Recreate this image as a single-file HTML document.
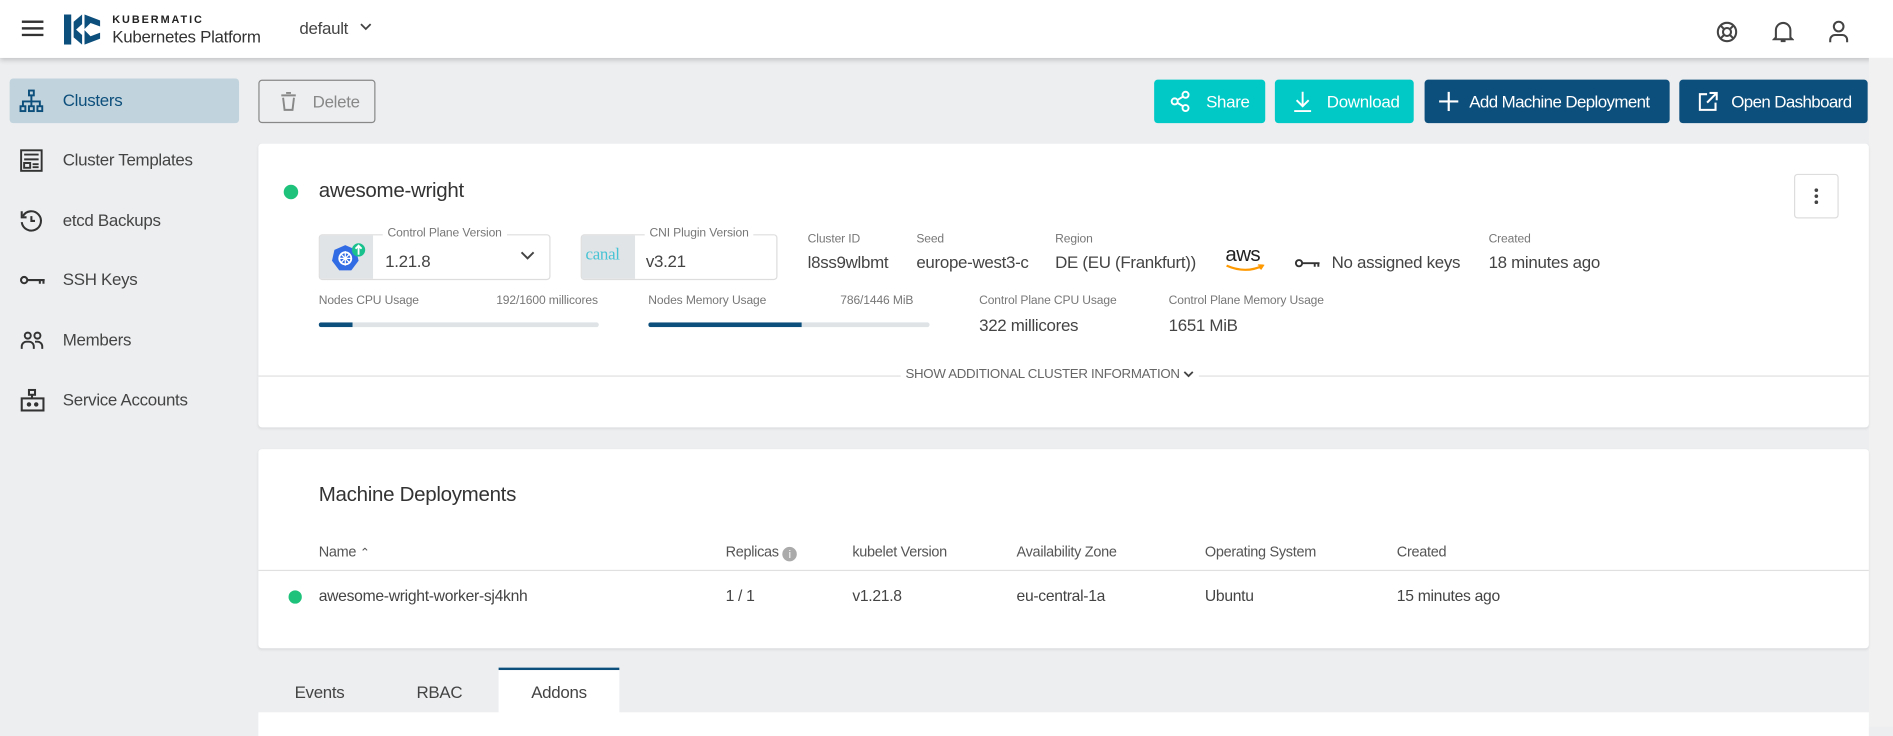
<!DOCTYPE html>
<html><head><meta charset="utf-8"><style>
*{box-sizing:border-box;margin:0;padding:0}
html,body{width:1893px;height:727px;overflow:hidden;background:#eceef0;font-family:"Liberation Sans",Arial,sans-serif}
#w{position:absolute;left:0;top:0;width:1568px;height:602px;transform:scale(1.20727);transform-origin:0 0;background:#eceef0;color:#333;letter-spacing:-0.25px}
.a{position:absolute}
.top{left:0;top:0;width:1568px;height:48px;background:#fff;box-shadow:0 2px 4px rgba(0,0,0,.18)}
.nav{left:8px;width:190px;height:37px;font-size:14px;color:#444;line-height:37px;padding-left:44px;border-radius:3px}
.nav svg{position:absolute;left:8px;top:9px}
.btn{top:66px;height:36px;border-radius:3px;color:#fff;font-size:14px;line-height:36px}
.card{background:#fff;border-radius:3px;box-shadow:0 1px 2px rgba(0,0,0,.08)}
.lbl{font-size:10px;color:#777;letter-spacing:-0.1px}
.val{font-size:14px;color:#444}
.bar{height:4px;background:#dfe3e6;border-radius:2px;overflow:hidden}
.bar i{display:block;height:4px;background:#0d4f7c}
.th{font-size:12px;color:#555;top:450px}
.td{font-size:13px;color:#444;top:486px}
</style></head><body><div id="w">
<div class="a top">
 <svg class="a" style="left:18px;top:17px" width="18" height="13"><rect y="0" width="18" height="2" fill="#333"/><rect y="5.5" width="18" height="2" fill="#333"/><rect y="11" width="18" height="2" fill="#333"/></svg>
 <svg class="a" style="left:53px;top:12px" width="30" height="25" viewBox="0 0 30 25"><path d="M0 0h6v25H0z" fill="#0d4f7c"/><path d="M8 6 L15 0 L15 8 L10 12.5 L15 17 L15 25 L8 19z" fill="#0d4f7c"/><path d="M17 0 L30 5 L30 10 L22 7 L17 12z M17 13 L22 18 L30 15 L30 20 L17 25z" fill="#0d4f7c"/></svg>
 <div class="a" style="left:93px;top:11px;font-size:9px;font-weight:bold;letter-spacing:1.6px;color:#222">KUBERMATIC</div>
 <div class="a" style="left:93px;top:22px;font-size:14px;color:#333">Kubernetes Platform</div>
 <div class="a" style="left:248px;top:15px;font-size:14px;color:#444">default</div>
 <svg class="a" style="left:298px;top:19px" width="10" height="7"><path d="M1 1l4 4 4-4" stroke="#444" stroke-width="1.5" fill="none"/></svg>
 <svg class="a" style="left:1421px;top:17px" width="19" height="19" viewBox="0 0 20 20" fill="none" stroke="#444" stroke-width="1.8"><circle cx="10" cy="10" r="8"/><circle cx="10" cy="10" r="3.5"/><path d="M4.5 4.5l3 3M15.5 4.5l-3 3M4.5 15.5l3-3M15.5 15.5l-3-3"/></svg>
 <svg class="a" style="left:1468px;top:16px" width="18" height="20" viewBox="0 0 18 20" fill="none" stroke="#444" stroke-width="1.7"><path d="M3 15V9a6 6 0 0 1 12 0v6l1.5 1.5h-15z"/><path d="M7 18h4"/></svg>
 <svg class="a" style="left:1514px;top:16px" width="18" height="20" viewBox="0 0 18 20" fill="none" stroke="#444" stroke-width="1.7"><circle cx="9" cy="6" r="4"/><path d="M2 19v-2a4 4 0 0 1 4-4h6a4 4 0 0 1 4 4v2"/></svg>
</div>
<div class="a" style="left:1548px;top:48px;width:20px;height:554px;background:#f1f1f1"></div>

<div class="a nav" style="top:65px;background:#c1d3dc;color:#0d4f7c"><svg width="20" height="20" viewBox="0 0 20 20" fill="none" stroke="#0d4f7c" stroke-width="1.6"><rect x="8" y="1" width="4" height="4"/><rect x="1" y="14" width="4" height="4"/><rect x="8" y="14" width="4" height="4"/><rect x="15" y="14" width="4" height="4"/><path d="M10 5v9M3 14v-4h14v4"/></svg>Clusters</div>
<div class="a nav" style="top:114px"><svg width="20" height="20" viewBox="0 0 20 20" fill="none" stroke="#333" stroke-width="1.6"><rect x="1.5" y="1.5" width="17" height="17"/><path d="M4 5h12M4 9h12M4 12h5v4H4zM11 13h5M11 15.5h5"/></svg>Cluster Templates</div>
<div class="a nav" style="top:164px"><svg width="20" height="20" viewBox="0 0 20 20" fill="none" stroke="#333" stroke-width="1.7"><path d="M3 6a8 8 0 1 1-1 5"/><path d="M2 2v5h4"/><path d="M10 6v4h3"/></svg>etcd Backups</div>
<div class="a nav" style="top:213px"><svg width="22" height="20" viewBox="0 0 22 20" fill="none" stroke="#333" stroke-width="1.7"><circle cx="4" cy="10" r="2.6"/><path d="M7 10h14M17 10v3M20 10v3"/></svg>SSH Keys</div>
<div class="a nav" style="top:263px"><svg width="22" height="20" viewBox="0 0 22 20" fill="none" stroke="#333" stroke-width="1.6"><circle cx="7" cy="6" r="2.5"/><circle cx="15" cy="6" r="2.5"/><path d="M2 17v-2a4 4 0 0 1 4-4h2a4 4 0 0 1 4 4v2M13 11h2a4 4 0 0 1 4 4v2"/></svg>Members</div>
<div class="a nav" style="top:313px"><svg width="22" height="20" viewBox="0 0 22 20" fill="none" stroke="#333" stroke-width="1.7"><rect x="8" y="1" width="5" height="4"/><path d="M10.5 5v3"/><rect x="2" y="8" width="18" height="10"/><circle cx="8" cy="13" r="1" fill="#333"/><circle cx="14" cy="13" r="1" fill="#333"/></svg>Service Accounts</div>

<div class="a" style="left:214px;top:66px;width:97px;height:36px;border:1px solid #888;border-radius:3px;color:#888;font-size:14px;line-height:34px;padding-left:44px">Delete
<svg class="a" style="left:17px;top:9px" width="14" height="16" viewBox="0 0 14 16" fill="none" stroke="#888" stroke-width="1.6"><path d="M1 3h12M5 1h4M2.5 5l1.2 10h6.6l1.2-10"/></svg></div>
<div class="a btn" style="left:956px;width:92px;background:#00c9c6;padding-left:43px">Share<svg class="a" style="left:13px;top:9px" width="17" height="18" viewBox="0 0 17 18" fill="none" stroke="#fff" stroke-width="1.6"><circle cx="13" cy="3.5" r="2.5"/><circle cx="4" cy="9" r="2.5"/><circle cx="13" cy="14.5" r="2.5"/><path d="M6 8l5-3M6 10l5 3"/></svg></div>
<div class="a btn" style="left:1056px;width:115px;background:#00c9c6;padding-left:43px">Download<svg class="a" style="left:15px;top:9px" width="16" height="18" viewBox="0 0 16 18" fill="none" stroke="#fff" stroke-width="1.6"><path d="M8 1v12M3 8l5 5 5-5M1 17h14"/></svg></div>
<div class="a btn" style="left:1180px;width:203px;background:#0d4f7c;padding-left:37px;letter-spacing:-0.5px">Add Machine Deployment<svg class="a" style="left:12px;top:10px" width="16" height="16"><path d="M8 0v16M0 8h16" stroke="#fff" stroke-width="1.8"/></svg></div>
<div class="a btn" style="left:1391px;width:156px;background:#0d4f7c;padding-left:43px;letter-spacing:-0.5px">Open Dashboard<svg class="a" style="left:16px;top:10px" width="16" height="16" viewBox="0 0 16 16" fill="none" stroke="#fff" stroke-width="1.7"><path d="M7 2H1v13h13V9M9 1h6v6M15 1L7 9"/></svg></div>

<div class="a card" style="left:214px;top:119px;width:1334px;height:235px">
 <div class="a" style="left:21px;top:34px;width:12px;height:12px;border-radius:50%;background:#1fc27a"></div>
 <div class="a" style="left:50px;top:29px;font-size:17px;color:#333">awesome-wright</div>
 <div class="a" style="left:1272px;top:25px;width:37px;height:37px;border:1px solid #ddd;border-radius:3px"><div class="a" style="left:16px;top:11px;width:3px;height:3px;border-radius:50%;background:#444;box-shadow:0 5px 0 #444,0 10px 0 #444"></div></div>
 <div class="a" style="left:50px;top:75px;width:192px;height:38px;border:1px solid #ddd;border-radius:3px;background:#fff"><div class="a" style="left:0;top:0;width:44px;height:36px;background:#e1e4e7"></div>
  <svg class="a" style="left:9px;top:6px" width="30" height="26" viewBox="0 0 30 26"><path d="M12 2l9 4 2 9-6 8h-10l-6-8 2-9z" fill="#326ce5"/><circle cx="12" cy="13" r="5" fill="none" stroke="#fff" stroke-width="1.5"/><path d="M12 7v12M6.5 13h11M8 9l8 8M16 9l-8 8" stroke="#fff" stroke-width="1"/><circle cx="23" cy="6" r="5.5" fill="#19c18d"/><path d="M23 10V2.5M20.5 5l2.5-2.5 2.5 2.5" stroke="#fff" stroke-width="1.5" fill="none"/></svg>
  <div class="a lbl" style="left:52px;top:-7px;background:#fff;padding:0 4px">Control Plane Version</div>
  <div class="a val" style="left:54px;top:13px">1.21.8</div>
  <svg class="a" style="left:166px;top:13px" width="12" height="8"><path d="M1 1l5 5 5-5" stroke="#444" stroke-width="1.6" fill="none"/></svg></div>
 <div class="a" style="left:267px;top:75px;width:163px;height:38px;border:1px solid #ddd;border-radius:3px;background:#fff"><div class="a" style="left:0;top:0;width:44px;height:36px;background:#e1e4e7"></div>
  <div class="a" style="left:3px;top:9px;font-family:'Liberation Serif',serif;font-size:14px;color:#46c3d4">canal</div>
  <div class="a lbl" style="left:52px;top:-7px;background:#fff;padding:0 4px">CNI Plugin Version</div>
  <div class="a val" style="left:53px;top:13px">v3.21</div></div>
 <div class="a lbl" style="left:455px;top:74px">Cluster ID</div><div class="a val" style="left:455px;top:90px">l8ss9wlbmt</div>
 <div class="a lbl" style="left:545px;top:74px">Seed</div><div class="a val" style="left:545px;top:90px">europe-west3-c</div>
 <div class="a lbl" style="left:660px;top:74px">Region</div><div class="a val" style="left:660px;top:90px">DE (EU (Frankfurt))</div>
 <div class="a" style="left:801px;top:82px;font-size:17px;color:#222;letter-spacing:-.5px">aws</div>
 <svg class="a" style="left:801px;top:100px" width="34" height="8"><path d="M1 1q16 7 30 0M27 0l4 1-2 3" stroke="#f90" stroke-width="1.8" fill="none"/></svg>
 <svg class="a" style="left:858px;top:94px" width="22" height="10" fill="none" stroke="#333" stroke-width="1.6"><circle cx="4" cy="5" r="2.6"/><path d="M7 5h14M17 5v3M20 5v3"/></svg>
 <div class="a val" style="left:889px;top:90px">No assigned keys</div>
 <div class="a lbl" style="left:1019px;top:74px">Created</div><div class="a val" style="left:1019px;top:90px">18 minutes ago</div>
 <div class="a lbl" style="left:50px;top:125px">Nodes CPU Usage</div><div class="a lbl" style="left:197px;top:125px">192/1600 millicores</div>
 <div class="a bar" style="left:50px;top:148px;width:232px"><i style="width:28px"></i></div>
 <div class="a lbl" style="left:323px;top:125px">Nodes Memory Usage</div><div class="a lbl" style="left:482px;top:125px">786/1446 MiB</div>
 <div class="a bar" style="left:323px;top:148px;width:233px"><i style="width:127px"></i></div>
 <div class="a lbl" style="left:597px;top:125px">Control Plane CPU Usage</div><div class="a val" style="left:597px;top:142px">322 millicores</div>
 <div class="a lbl" style="left:754px;top:125px">Control Plane Memory Usage</div><div class="a val" style="left:754px;top:142px">1651 MiB</div>
 <div class="a" style="left:0;top:192px;width:1334px;height:1px;background:#e0e0e0"></div>
 <div class="a" style="left:532px;top:185px;background:#fff;padding:0 4px;font-size:11px;color:#666">SHOW ADDITIONAL CLUSTER INFORMATION <svg width="9" height="6"><path d="M1 1l3.5 3.5L8 1" stroke="#444" stroke-width="1.5" fill="none"/></svg></div>
</div>

<div class="a card" style="left:214px;top:372px;width:1334px;height:165px"></div>
<div class="a" style="left:264px;top:400px;font-size:17px;color:#333">Machine Deployments</div>
<div class="a th" style="left:264px">Name <span style="font-size:10px">&#8963;</span></div>
<div class="a th" style="left:601px">Replicas <span style="display:inline-block;width:12px;height:12px;border-radius:50%;background:#aaa;color:#fff;font-size:9px;text-align:center;line-height:12px;vertical-align:-1px">i</span></div>
<div class="a th" style="left:706px">kubelet Version</div>
<div class="a th" style="left:842px">Availability Zone</div>
<div class="a th" style="left:998px">Operating System</div>
<div class="a th" style="left:1157px">Created</div>
<div class="a" style="left:214px;top:472px;width:1334px;height:1px;background:#e0e0e0"></div>
<div class="a" style="left:239px;top:489px;width:11px;height:11px;border-radius:50%;background:#1fc27a"></div>
<div class="a td" style="left:264px">awesome-wright-worker-sj4knh</div>
<div class="a td" style="left:601px">1 / 1</div>
<div class="a td" style="left:706px">v1.21.8</div>
<div class="a td" style="left:842px">eu-central-1a</div>
<div class="a td" style="left:998px">Ubuntu</div>
<div class="a td" style="left:1157px">15 minutes ago</div>

<div class="a" style="left:244px;top:565px;font-size:14px;color:#444">Events</div>
<div class="a" style="left:345px;top:565px;font-size:14px;color:#444">RBAC</div>
<div class="a" style="left:413px;top:553px;width:100px;height:40px;background:#fff;border-top:2px solid #0d4f7c;font-size:14px;color:#444;text-align:center;line-height:36px">Addons</div>
<div class="a" style="left:214px;top:590px;width:1334px;height:20px;background:#fff"></div>
</div></body></html>
